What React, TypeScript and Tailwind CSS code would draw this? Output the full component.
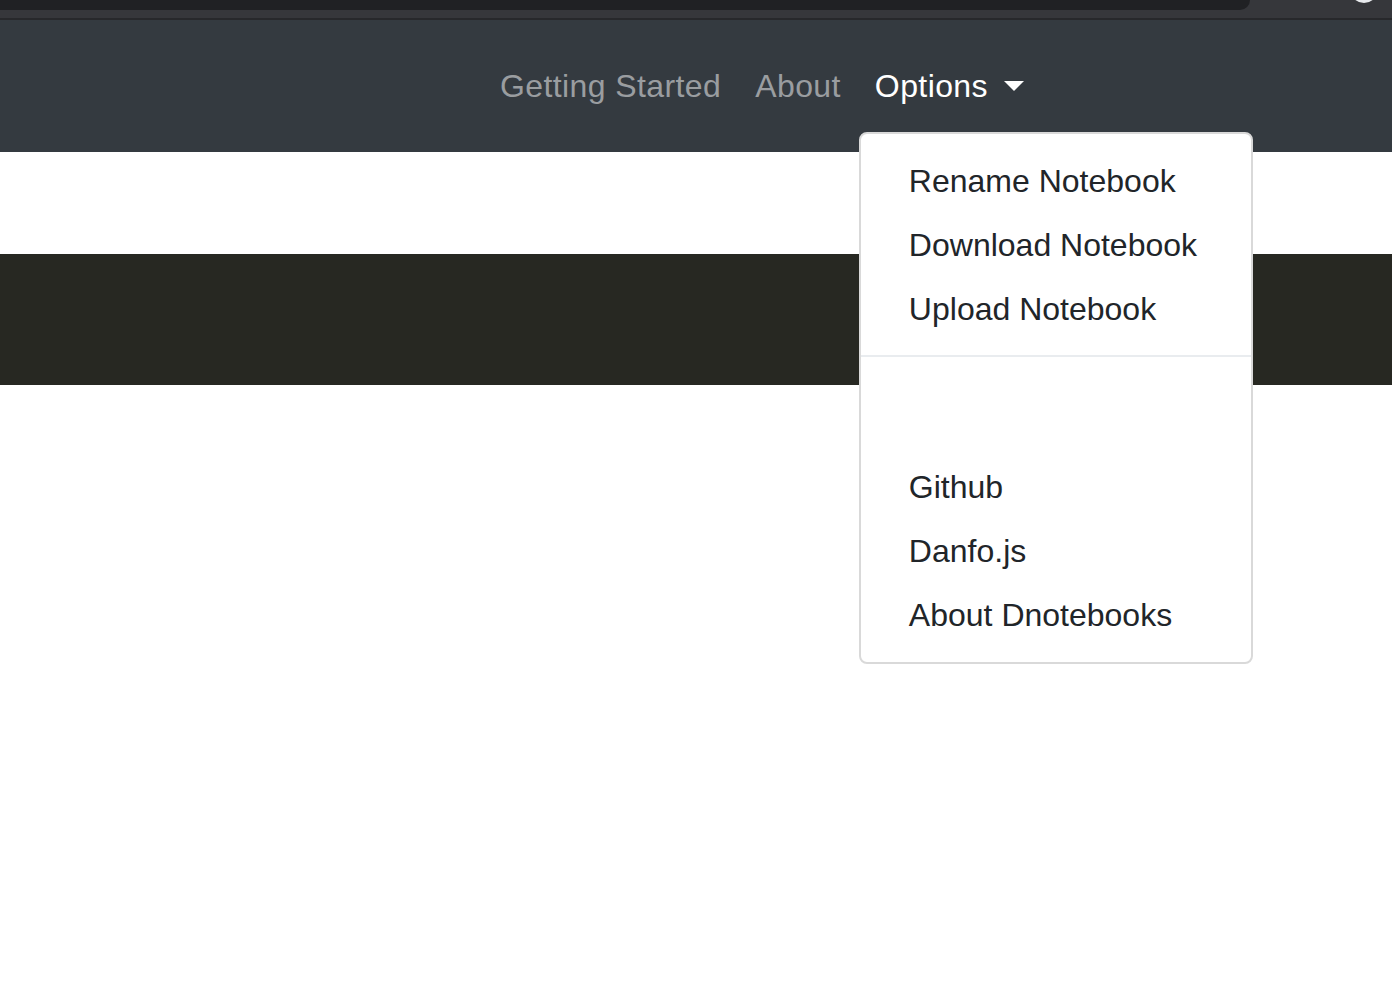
import React from "react";

const topItems = ["Rename Notebook", "Download Notebook", "Upload Notebook"];
const bottomItems = ["Github", "Danfo.js", "About Dnotebooks"];

const DropdownItem = ({ label }: { label: string }) => (
  <a className="block px-[48px] py-[8px] text-[32px] leading-[48px] text-[#212529] whitespace-nowrap">
    {label}
  </a>
);

const Navbar = () => (
  <nav className="h-[132px] bg-[#343a40] flex items-center pl-[484px]">
    <ul className="flex items-center gap-[2px]">
      <li>
        <a className="block px-[16px] py-[8px] text-[32px] leading-[48px] tracking-[0.4px] text-[#9a9da0]">
          Getting Started
        </a>
      </li>
      <li>
        <a className="block px-[16px] py-[8px] text-[32px] leading-[48px] tracking-[0.4px] text-[#9a9da0]">
          About
        </a>
      </li>
      <li className="relative">
        <a className="flex items-center px-[16px] py-[8px] text-[32px] leading-[48px] tracking-[0.4px] text-white">
          Options
          <span className="ml-[16px] w-0 h-0 border-t-[10px] border-t-white border-x-[10px] border-x-transparent" />
        </a>
        {/* open dropdown */}
        <div className="absolute left-0 top-full mt-[14px] z-10 w-[394px] bg-white border-2 border-[#d9d9d9] rounded-[8px] pt-[15px] pb-[15px]">
          {topItems.map((item) => (
            <DropdownItem key={item} label={item} />
          ))}
          <div className="mt-[14px] h-[2px] bg-[#e9ecef]" />
          <div className="h-[98px]" />
          {bottomItems.map((item) => (
            <DropdownItem key={item} label={item} />
          ))}
        </div>
      </li>
    </ul>
  </nav>
);

export default function App() {
  return (
    <div
      className="relative w-[1392px] h-[990px] bg-white overflow-hidden"
      style={{ fontFamily: '"Liberation Sans", Arial, sans-serif' }}
    >
      {/* browser chrome strip */}
      <div className="relative h-[18px] bg-[#36373b]">
        <div className="h-[10px] w-[1250px] bg-[#202124] rounded-br-[12px]" />
        <div className="absolute left-[1350px] top-[-12px] w-[28px] h-[15px] rounded-b-full bg-[#e8eaed]" />
      </div>
      <div className="h-[2px] bg-[#27282b]" />
      <Navbar />
      <div className="h-[102px]" />
      <div className="h-[131px] bg-[#272822]" />
    </div>
  );
}
